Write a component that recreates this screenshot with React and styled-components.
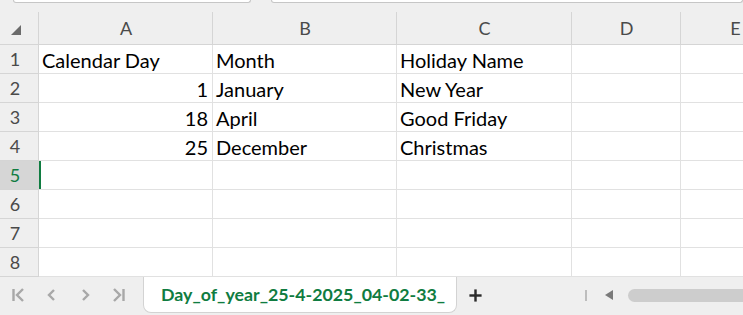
import React from 'react';
import styled, { createGlobalStyle } from 'styled-components';

const GlobalStyle = createGlobalStyle`
  html, body { margin: 0; padding: 0; background: #efefef; }
  body { font-family: Lato, "Liberation Sans", sans-serif; overflow: hidden; }
`;

const columns = ['A', 'B', 'C', 'D', 'E'];

const rows = [
  ['Calendar Day', 'Month', 'Holiday Name'],
  [1, 'January', 'New Year'],
  [18, 'April', 'Good Friday'],
  [25, 'December', 'Christmas'],
  [], [], [], [],
];

export default function App() {
  return (
    <React.Fragment>
      <GlobalStyle />
      <Page>
        <TopStrip>
          <NameBox />
          <FormulaBox />
        </TopStrip>
        <Grid>
          <Corner>
            <svg width="10" height="10" viewBox="0 0 10 10">
              <polygon points="10,0 10,10 0,10" fill="#6b6b6b" />
            </svg>
          </Corner>
          {columns.map(c => (
            <ColHead key={c}>{c}</ColHead>
          ))}
          {rows.map((r, i) => (
            <React.Fragment key={i}>
              <RowHead $selected={i === 4}>{i + 1}</RowHead>
              {columns.map((c, j) => {
                const v = r[j];
                return (
                  <Cell key={c} $num={typeof v === 'number'} $active={i === 4 && j === 0}>
                    {v}
                  </Cell>
                );
              })}
            </React.Fragment>
          ))}
        </Grid>
        <TabBar>
          <Nav>
            <NavIcon viewBox="0 0 16 16">
              <line x1="2.5" y1="2" x2="2.5" y2="14" />
              <polyline points="12,2 6,8 12,14" />
            </NavIcon>
            <NavIcon viewBox="0 0 16 16">
              <polyline points="10,3 5,8 10,13" />
            </NavIcon>
            <NavIcon viewBox="0 0 16 16">
              <polyline points="6,3 11,8 6,13" />
            </NavIcon>
            <NavIcon viewBox="0 0 16 16">
              <polyline points="4,2 10,8 4,14" />
              <line x1="13.5" y1="2" x2="13.5" y2="14" />
            </NavIcon>
          </Nav>
          <SheetTab>Day_of_year_25-4-2025_04-02-33_</SheetTab>
          <AddButton viewBox="0 0 16 16">
            <line x1="8" y1="1.5" x2="8" y2="14.5" />
            <line x1="1.5" y1="8" x2="14.5" y2="8" />
          </AddButton>
          <ScrollArea>
            <Splitter />
            <ScrollArrow width="8" height="10" viewBox="0 0 8 10">
              <polygon points="8,0 8,10 0,5" fill="#7a7a7a" />
            </ScrollArrow>
            <Thumb />
          </ScrollArea>
        </TabBar>
      </Page>
    </React.Fragment>
  );
}

const Page = styled.div`
  width: 743px;
  height: 315px;
  display: flex;
  flex-direction: column;
  background: #efefef;
  overflow: hidden;
`;

const TopStrip = styled.div`
  height: 12px;
  display: flex;
  align-items: flex-start;
  padding-left: 13px;
  gap: 20px;
`;

const NameBox = styled.div`
  width: 236px;
  height: 2px;
  background: #fff;
  border: 1px solid #c6c6c6;
  border-top: none;
  border-radius: 0 0 4px 4px;
`;

const FormulaBox = styled(NameBox)`
  width: 471px;
`;

const Grid = styled.div`
  display: grid;
  grid-template-columns: 39px 174px 184px 175px 109px 109px;
  grid-template-rows: 33px repeat(8, 29px);
  background: #fff;
`;

const Corner = styled.div`
  background: #efefef;
  border-bottom: 1px solid #d5d5d5;
  border-right: 1px solid #d5d5d5;
  display: flex;
  align-items: flex-end;
  padding: 0 0 9px 11px;
  box-sizing: border-box;
`;

const ColHead = styled.div`
  background: #efefef;
  border-bottom: 1px solid #d5d5d5;
  color: #4a4a4a;
  font-size: 18px;
  display: flex;
  align-items: center;
  justify-content: center;
  position: relative;
  &::after {
    content: '';
    position: absolute;
    right: 0;
    bottom: 0;
    height: 32px;
    border-right: 1px solid #d5d5d5;
  }
`;

const RowHead = styled.div`
  background: ${p => (p.$selected ? '#d6d6d6' : '#efefef')};
  color: ${p => (p.$selected ? '#107c41' : '#4a4a4a')};
  border-bottom: 1px solid #d5d5d5;
  border-right: 1px solid #d5d5d5;
  font-size: 18px;
  box-sizing: border-box;
  display: flex;
  align-items: center;
  justify-content: center;
  padding-right: 8px;
`;

const Cell = styled.div`
  border-bottom: 1px solid #e1e1e1;
  border-right: 1px solid #e1e1e1;
  box-sizing: border-box;
  color: #000;
  font-size: 20px;
  white-space: nowrap;
  overflow: hidden;
  display: flex;
  align-items: center;
  justify-content: ${p => (p.$num ? 'flex-end' : 'flex-start')};
  padding: 1px 4px 0 3px;
  box-shadow: ${p => (p.$active ? 'inset 2px 0 0 #107c41' : 'none')};
`;

const TabBar = styled.div`
  flex: 1;
  display: flex;
  align-items: flex-start;
  background: #efefef;
`;

const Nav = styled.div`
  width: 143px;
  height: 36px;
  display: flex;
  align-items: center;
  gap: 17px;
  padding-left: 11px;
  box-sizing: border-box;
`;

const NavIcon = styled.svg`
  width: 16px;
  height: 16px;
  fill: none;
  stroke: #a8a8a8;
  stroke-width: 2.4;
`;

const SheetTab = styled.div`
  width: 314px;
  height: 36px;
  box-sizing: border-box;
  background: #fff;
  border: 1px solid #d3d3d3;
  border-top: none;
  border-radius: 0 0 8px 8px;
  color: #107c41;
  font-weight: 700;
  font-size: 17.8px;
  display: flex;
  align-items: center;
  padding: 0 0 2px 17px;
  white-space: nowrap;
`;

const AddButton = styled.svg`
  width: 15px;
  height: 15px;
  margin: 11px 0 0 11px;
  stroke: #2b2b2b;
  stroke-width: 2.6;
`;

const ScrollArea = styled.div`
  flex: 1;
  height: 36px;
  display: flex;
  align-items: center;
  padding-left: 102px;
`;

const Splitter = styled.div`
  width: 2px;
  height: 11px;
  background: #bdbdbd;
`;

const ScrollArrow = styled.svg`
  margin: 0 15px 0 18px;
`;

const Thumb = styled.div`
  flex: 1;
  height: 13px;
  margin-right: -10px;
  border-radius: 7px;
  background: #cdcdcd;
`;
